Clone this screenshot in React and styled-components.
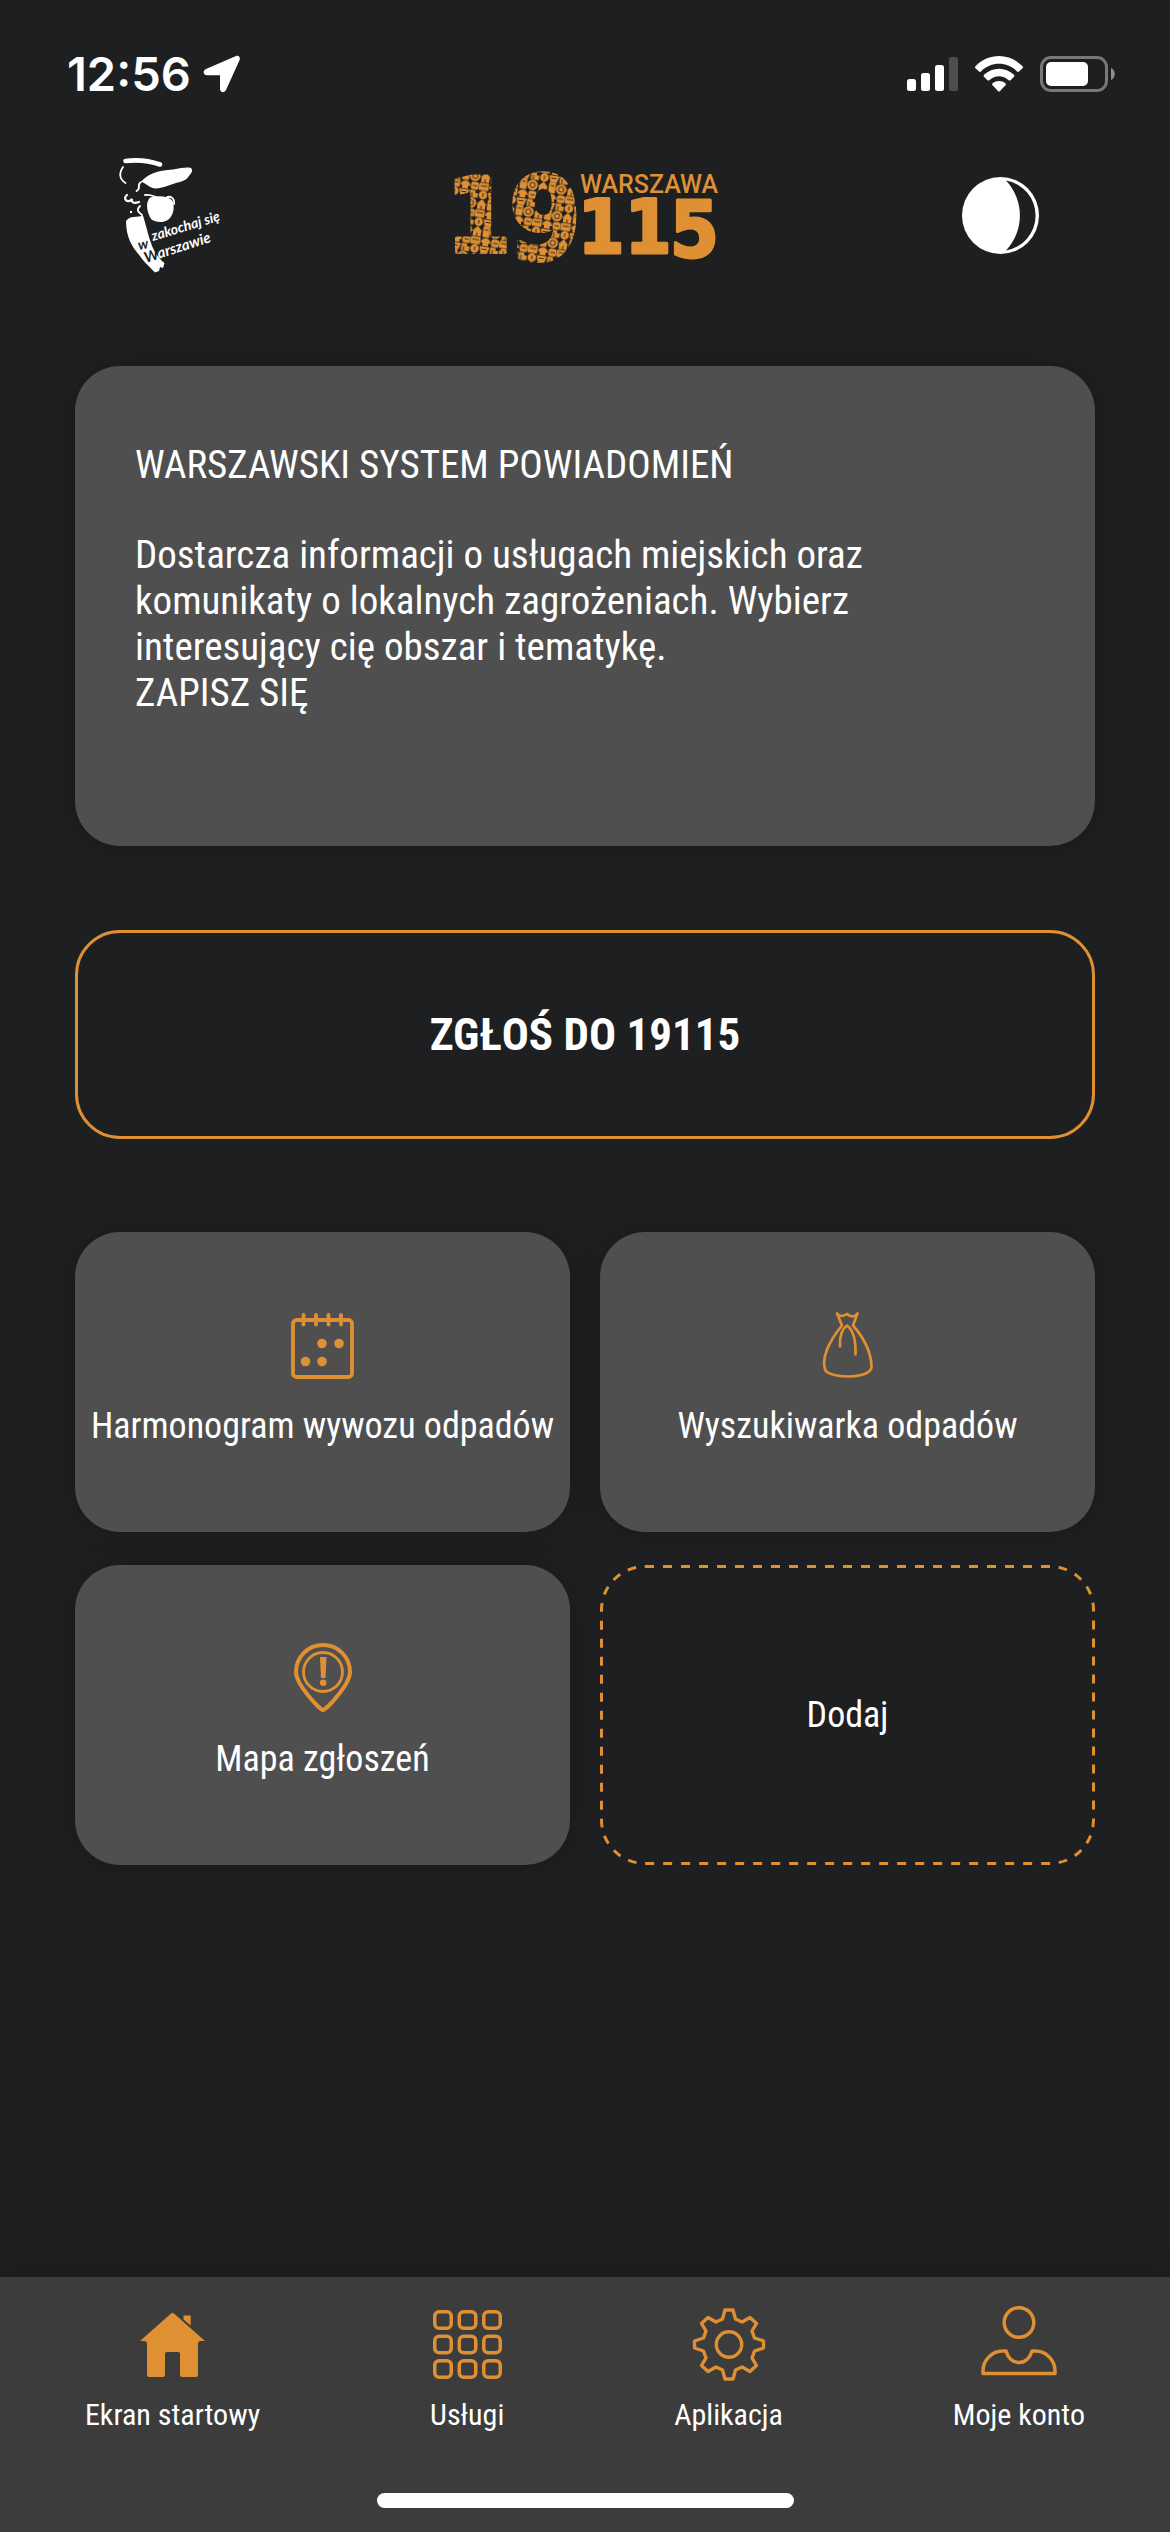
import React from "react";
import styled, { createGlobalStyle, css } from "styled-components";

const color = {
  page: "#1e1f21",
  card: "#4f4f4f",
  bar: "#3c3c3c",
  accent: "#de9033",
  text: "#ffffff",
};

const GlobalStyle = createGlobalStyle`
  * { box-sizing: border-box; }
  body {
    margin: 0;
    background: ${color.page};
    color: ${color.text};
    font-family: "Roboto Condensed", Roboto, "Liberation Sans", sans-serif;
  }
`;

const Page = styled.div`
  display: flex;
  flex-direction: column;
  min-height: 100vh;
`;

const StatusBar = styled.div`
  display: flex;
  align-items: center;
  justify-content: space-between;
  height: 148px;
  padding: 0 54px 0 67px;
`;

const StatusGroup = styled.div`
  display: flex;
  align-items: center;
  gap: ${(p) => p.$gap}px;
`;

const Clock = styled.time`
  font: 600 47px/56px Inter, sans-serif;
`;

const Header = styled.header`
  display: flex;
  align-items: center;
  justify-content: space-between;
  padding: 0 119px;
  height: 134px;
`;

const BrandLink = styled.a`
  display: flex;
  justify-content: center;
  color: inherit;
`;

const resetButton = css`
  margin: 0;
  padding: 0;
  border: 0;
  background: none;
  color: inherit;
  font-family: inherit;
  cursor: pointer;
`;

const ContrastButton = styled.button`
  ${resetButton}
  display: flex;
  justify-content: center;
  width: 102px;
`;

const Main = styled.main`
  flex: 1;
  display: flex;
  flex-direction: column;
  padding: 84px 75px 60px;
`;

const surface = css`
  background: ${color.card};
  border-radius: 45px;
  box-shadow: 0 0 30px rgba(0, 0, 0, 0.2);
`;

const InfoCard = styled.section`
  ${surface}
  min-height: 480px;
  padding: 76px 150px 75px 60px;
  font-size: 39px;
  line-height: 46px;
`;

const InfoTitle = styled.h1`
  margin: 0 0 44px;
  font: inherit;
`;

const InfoText = styled.p`
  margin: 0;
`;

const SignUpLink = styled.a`
  color: inherit;
  text-decoration: none;
`;

const ReportButton = styled.button`
  ${resetButton}
  margin-top: 84px;
  min-height: 209px;
  border: 3px solid ${color.accent};
  border-radius: 45px;
  font-size: 45px;
  line-height: 54px;
  font-weight: 700;
`;

const TileGrid = styled.div`
  display: grid;
  grid-template-columns: 1fr 1fr;
  gap: 33px 30px;
  margin-top: 93px;
`;

const tileBase = css`
  ${resetButton}
  display: flex;
  flex-direction: column;
  align-items: center;
  min-height: 300px;
  font-size: 36px;
  line-height: 44px;
`;

const Tile = styled.button`
  ${tileBase}
  ${surface}
  gap: 25px;
  padding-top: 78px;
`;

const TileIcon = styled.span`
  display: flex;
  align-items: flex-end;
  height: 69px;
`;

const AddTile = styled.button`
  ${tileBase}
  justify-content: center;
  position: relative;
`;

const DashedOutline = styled.svg`
  position: absolute;
  inset: 0;
  width: 100%;
  height: 100%;
  border-radius: 45px;
  overflow: hidden;
`;

const BottomBar = styled.footer`
  display: flex;
  flex-direction: column;
  align-items: center;
  gap: 60px;
  padding: 31px 0 24px;
  background: ${color.bar};
  box-shadow: 0 0 30px rgba(0, 0, 0, 0.2);
`;

const Nav = styled.nav`
  display: flex;
  justify-content: space-around;
  width: 100%;
`;

const NavLink = styled.a`
  display: flex;
  flex-direction: column;
  align-items: center;
  gap: 16px;
  color: inherit;
  text-decoration: none;
  font-size: 30px;
  line-height: 36px;
`;

const NavIcon = styled.span`
  display: flex;
  align-items: center;
  height: 73px;
`;

const HomeIndicator = styled.div`
  width: 417px;
  height: 15px;
  border-radius: 8px;
  background: ${color.text};
`;

const line = { fill: "none", stroke: color.accent, strokeLinecap: "round", strokeLinejoin: "round" };

const LocationArrow = () => (
  <svg width="38" height="38" viewBox="0 0 38 38" fill="#fff" aria-hidden="true">
    <path d="M32.500 1.200 L3 14 C-0.500 15.700 0 20 4 20.200 H17 V33.500 C17.200 38 21 38.300 23 35 L36.600 5 C37.500 2 35.500 0 32.500 1.200Z" />
  </svg>
);

const Signal = () => (
  <svg width="51" height="34" viewBox="0 0 51 34" fill="#fff" aria-hidden="true">
    <rect x="0" y="22" width="9" height="12" rx="2.500" />
    <rect x="14" y="16" width="9" height="18" rx="2.500" />
    <rect x="28" y="8" width="9" height="26" rx="2.500" />
    <rect x="42" y="0" width="9" height="34" rx="2.500" fill="#4d4d4f" />
  </svg>
);

const Wifi = () => (
  <svg width="48" height="36" viewBox="0 0 48 36" fill="#fff" aria-hidden="true">
    <path d="M0.500 10.200 C13.500 -3.400 34.500 -3.400 47.500 10.200 Q48.500 11.300 47.500 12.300 L44 15.500 Q43 16.300 42 15.400 C32 5.300 16 5.300 6 15.400 Q5 16.300 4 15.500 L0.500 12.300 Q-0.500 11.300 0.500 10.200Z" />
    <path d="M9 18.800 C17.500 10.600 30.500 10.600 39 18.800 Q40 19.900 39 20.800 L35.600 24.200 Q34.600 25 33.600 24.200 C28 19 20 19 14.400 24.200 Q13.400 25 12.400 24.200 L9 20.800 Q8 19.900 9 18.800Z" />
    <path d="M17.600 27.200 C21.300 24.200 26.700 24.200 30.400 27.200 Q31.500 28.300 30.500 29.300 L25 35 Q24 36 23 35 L17.500 29.300 Q16.500 28.300 17.600 27.200Z" />
  </svg>
);

const Battery = () => (
  <svg width="76" height="36" viewBox="0 0 76 36" aria-hidden="true">
    <rect x="1.500" y="1.500" width="65" height="33" rx="9.500" fill="none" stroke="#78787a" strokeWidth="3" />
    <rect x="6" y="6" width="42" height="24" rx="5" fill="#fff" />
    <path d="M71 12 C76 14 76 22 71 24Z" fill="#8f8f90" />
  </svg>
);

const MermaidLogo = () => (
  <svg width="102" height="116" viewBox="0 0 102 116" overflow="visible" role="img" aria-label="zakochaj się w Warszawie">
    <g fill="none" stroke="#fff" strokeWidth="1.800" strokeLinecap="round">
      <path d="M6.500 4 C18 2.500 31 4 41 7.500" strokeWidth="4.600" />
      <path d="M4 10 C0 16 0 22 6.500 26" />
      <path d="M22 25 C17 28 23 31 17.500 34" />
      <path d="M8 38 C3 42 9 47 13 42 C12 47 17 46 20 45" strokeWidth="2.200" />
      <path d="M26 38 C31 37 34 39 37 40 M47 41 C51 38 56 41 55 47" />
      <path d="M21 49 C17 53 19 55 23 58" />
    </g>
    <g fill="#fff">
      <path d="M22 25 C27 18 39 13 54 12.500 C62 11 68 10 72 11 C74 13 73 16 70.500 18 C69 21 67 23 61 25 C52 27 46 31 36 31.500 C30 31 26 25 22 25Z" />
      <path d="M31 40.500 C38 39 46 38 53 43 C56 49 55 57 50 62 C44 67 36 65 32 62 C28 55 26 46 31 40.500Z" />
      <circle cx="12" cy="55" r="1.200" />
      <path d="M7 64 C11 58 18 61 24 58.500 C27 68 29 78 32 86 C35 95 40 102 45.500 106 L44 111 L41 110 L40 114 L36 115.500 C30 109 24 104 21 99 C13 90 7 80 7 64Z" />
    </g>
    <g fontFamily="Lato, sans-serif" fontStyle="italic" fontWeight="700" fill="#fff">
      <text transform="translate(34 84) rotate(-17)" fontSize="14">zakochaj się</text>
      <text transform="translate(20 93) rotate(-12)" fontSize="14" fill={color.page}>w</text>
      <text transform="translate(27 106) rotate(-18)" fontSize="15">
        <tspan fill={color.page}>W</tspan>arszawie
      </text>
    </g>
  </svg>
);

const CityLogo = () => (
  <svg width="264" height="96" viewBox="0 0 264 96" overflow="visible" role="img" aria-label="Warszawa 19115">
    <defs>
      <pattern id="pictograms" width="29" height="27" patternUnits="userSpaceOnUse" patternTransform="rotate(9)">
        <rect width="29" height="27" fill={color.page} />
        <g fill={color.accent}>
          <path d="M0 5.500 L5 0 L10 5.500 H9 V10.500 H1 V5.500Z" />
          <rect x="10.700" y="0" width="7" height="10.500" rx="1" />
          <circle cx="23.400" cy="5.300" r="5.300" />
          <path d="M0 11.200 H9.500 V18.500 H0Z" />
          <path d="M10 16 C10.500 9.500 19.500 9.500 20 16 H18 V19 H12 V16Z" />
          <rect x="20.600" y="11.200" width="8" height="7.500" rx="2" />
          <circle cx="5" cy="23" r="4.300" />
          <path d="M9.500 19.700 H19.800 L18 26.800 H11.500Z" />
          <path d="M20.500 19.400 H26 V22 H28.800 V26.800 H20.500Z" />
        </g>
        <g fill="none" stroke={color.page} strokeWidth="0.900">
          <path d="M5 7 V10.500 M12.500 3 H16 M1.500 14 H8 M22.500 15 H27 M12 22.500 H17 M5 21 V25 M23 22 V26.800" />
          <circle cx="23.400" cy="5.300" r="2.600" />
        </g>
      </pattern>
    </defs>
    <g fontFamily="'DejaVu Sans Condensed', 'DejaVu Sans', sans-serif" fontWeight="700" strokeLinejoin="round">
      <g fill="url(#pictograms)" stroke="url(#pictograms)" strokeWidth="4">
        <text x="-7" y="85" fontSize="104">1</text>
        <text x="56" y="92" fontSize="115">9</text>
      </g>
      <g fill={color.accent} stroke={color.accent} strokeWidth="3">
        <text x="125" y="86" fontSize="74">1</text>
        <text x="172" y="86" fontSize="74">1</text>
        <text x="217" y="90" fontSize="78">5</text>
      </g>
    </g>
    <text x="127" y="26" fontFamily="Roboto, sans-serif" fontWeight="500" fontSize="25" fill={color.accent}>
      WARSZAWA
    </text>
  </svg>
);

const ContrastIcon = () => (
  <svg width="77" height="77" viewBox="0 0 77 77" aria-hidden="true">
    <circle cx="38.500" cy="38.500" r="38.500" fill="#fff" />
    <path d="M44 3.500 A51 51 0 0 1 44 73.500 A35.500 35.500 0 0 0 44 3.500Z" fill={color.page} />
  </svg>
);

const CalendarIcon = () => (
  <svg width="63" height="66" viewBox="0 0 63 66" aria-hidden="true">
    <g {...line} strokeWidth="3.800">
      <rect x="2" y="7" width="59" height="57" rx="3.500" />
      <path d="M12.500 2 V11.500 M25 2 V11.500 M37.500 2 V11.500 M50 2 V11.500" />
    </g>
    <g fill={color.accent}>
      <circle cx="31" cy="30.500" r="4.800" />
      <circle cx="48" cy="30.500" r="4.800" />
      <circle cx="14.500" cy="48.500" r="4.800" />
      <circle cx="31" cy="48.500" r="4.800" />
    </g>
  </svg>
);

const BagIcon = () => (
  <svg width="51" height="67" viewBox="0 0 51 67" aria-hidden="true">
    <g {...line} strokeWidth="2.700">
      <path d="M20 13.500 L15 1.500 C17 4 21 5 25 2 C28 5 33 5.500 35.500 1.500 L31 13.500 C41 25 49 40 49.500 54 C50 60 42 64 28 64.500 C18 64.500 9 63 4 59.500 C-2 48 7 29 20 13.500Z" />
      <path d="M18 34.500 C17.500 25 20 17 25 13.500 C31 18 34 29 33.500 42.500" />
    </g>
  </svg>
);

const PinIcon = () => (
  <svg width="58" height="69" viewBox="0 0 58 69" aria-hidden="true">
    <path {...line} strokeWidth="4" d="M29 67 C26 66.500 2 42 2 29 C2 14 14 2 29 2 S56 14 56 29 C56 42 32 66.500 29 67Z" />
    <circle {...line} strokeWidth="2.800" cx="29" cy="29" r="19.500" />
    <path d="M26 14 H32.500 L31.500 35 H27Z" fill={color.accent} />
    <circle cx="29.200" cy="39.800" r="3.300" fill={color.accent} />
  </svg>
);

const HouseIcon = () => (
  <svg width="65" height="64" viewBox="0 0 65 64" fill={color.accent} aria-hidden="true">
    <path d="M31 0.600 Q32.500 -0.500 34 0.600 L65 28 H61 Q58 28 58 31 V62 Q58 64 56 64 H42 Q40 64 40 62 V41 Q40 39 38 39 H27 Q25 39 25 41 V62 Q25 64 23 64 H9 Q7 64 7 62 V31 Q7 28 4 28 H0Z" />
    <path d="M43.500 2.500 H50.700 V12.500 L43.500 6.500Z" />
  </svg>
);

const GridIcon = () => (
  <svg width="69" height="69" viewBox="0 0 69 69" aria-hidden="true">
    {[1.750, 26.250, 50.750].map((y) =>
      [1.750, 26.250, 50.750].map((x) => (
        <rect key={`${x}-${y}`} x={x} y={y} width="16.500" height="16.500" rx="4.500" {...line} strokeWidth="3.500" />
      ))
    )}
  </svg>
);

const GearIcon = () => (
  <svg width="74" height="73" viewBox="0 0 74 73" aria-hidden="true">
    <g {...line} strokeWidth="3.400">
      <path d="M33 2 H41 L43.500 11 L50 14 L58 9.500 L64.500 15.500 L60 23 L62.500 30 L71.500 33 V40 L62.500 43 L60 50 L64.500 57.500 L58 63.500 L50 59 L43.500 62 L41 71 H33 L30.500 62 L24 59 L16 63.500 L9.500 57.500 L14 50 L11.500 43 L2.500 40 V33 L11.500 30 L14 23 L9.500 15.500 L16 9.500 L24 14 L30.500 11Z" />
      <circle cx="37" cy="36.500" r="12.700" />
    </g>
  </svg>
);

const PersonIcon = () => (
  <svg width="76" height="77" viewBox="0 0 76 77" aria-hidden="true">
    <g {...line} strokeWidth="3.500">
      <circle cx="38" cy="16.500" r="14.800" />
      <path d="M2 67.500 V65 C2 54 11 45 22 45 H25 C27 52 32 56.500 38 56.500 S49 52 51 45 H54 C65 45 74 54 74 65 V67.500Z" />
    </g>
  </svg>
);

const tiles = [
  { label: "Harmonogram wywozu odpadów", Icon: CalendarIcon },
  { label: "Wyszukiwarka odpadów", Icon: BagIcon },
  { label: "Mapa zgłoszeń", Icon: PinIcon },
];

const navItems = [
  { label: "Ekran startowy", Icon: HouseIcon, current: "page" },
  { label: "Usługi", Icon: GridIcon },
  { label: "Aplikacja", Icon: GearIcon },
  { label: "Moje konto", Icon: PersonIcon },
];

export default function App() {
  return (
    <>
      <GlobalStyle />
      <Page>
        <StatusBar>
          <StatusGroup $gap={12}>
            <Clock>12:56</Clock>
            <LocationArrow />
          </StatusGroup>
          <StatusGroup $gap={17}>
            <Signal />
            <Wifi />
            <Battery />
          </StatusGroup>
        </StatusBar>
        <Header>
          <BrandLink href="#warszawa">
            <MermaidLogo />
          </BrandLink>
          <BrandLink href="#19115">
            <CityLogo />
          </BrandLink>
          <ContrastButton type="button" aria-label="Kontrast">
            <ContrastIcon />
          </ContrastButton>
        </Header>
        <Main>
          <InfoCard>
            <InfoTitle>WARSZAWSKI SYSTEM POWIADOMIEŃ</InfoTitle>
            <InfoText>
              Dostarcza informacji o usługach miejskich oraz komunikaty o lokalnych zagrożeniach. Wybierz
              interesujący cię obszar i tematykę.
            </InfoText>
            <SignUpLink href="#zapisz">ZAPISZ SIĘ</SignUpLink>
          </InfoCard>
          <ReportButton type="button">ZGŁOŚ DO 19115</ReportButton>
          <TileGrid>
            {tiles.map(({ label, Icon }) => (
              <Tile type="button" key={label}>
                <TileIcon>
                  <Icon />
                </TileIcon>
                {label}
              </Tile>
            ))}
            <AddTile type="button">
              <DashedOutline aria-hidden="true">
                <rect
                  width="100%"
                  height="100%"
                  rx="45"
                  fill="none"
                  stroke={color.accent}
                  strokeWidth="6"
                  strokeDasharray="9 9"
                />
              </DashedOutline>
              Dodaj
            </AddTile>
          </TileGrid>
        </Main>
        <BottomBar>
          <Nav>
            {navItems.map(({ label, Icon, current }) => (
              <NavLink href="#" key={label} aria-current={current}>
                <NavIcon>
                  <Icon />
                </NavIcon>
                {label}
              </NavLink>
            ))}
          </Nav>
          <HomeIndicator />
        </BottomBar>
      </Page>
    </>
  );
}
